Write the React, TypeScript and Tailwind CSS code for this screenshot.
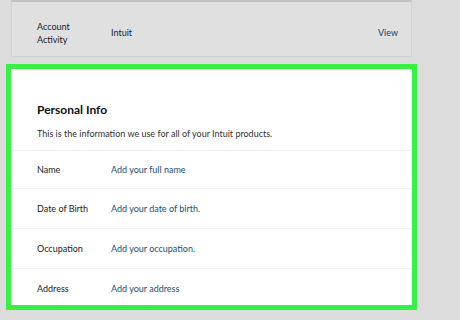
import React from 'react';

const rows = [
  { label: 'Name', value: 'Add your full name' },
  { label: 'Date of Birth', value: 'Add your date of birth.' },
  { label: 'Occupation', value: 'Add your occupation.' },
  { label: 'Address', value: 'Add your address' },
];

export default function App() {
  return (
    <div className="w-[460px] h-[320px] overflow-hidden bg-[#dcdcdc] font-['Lato',sans-serif]">
      {/* previous card, cut off at top */}
      <div className="ml-[11px] w-[401px] h-[57px] pt-[7px] bg-[#e0e0e0] border border-[#d3d3d3] border-t-2 border-t-[#c2c2c2] flex items-center text-[9px] text-[#222]">
        <div className="w-[74px] pl-[25px] box-content leading-[13px]">
          Account
          <br />
          Activity
        </div>
        <div className="flex-1">Intuit</div>
        <div className="pr-[13px] text-[#1e3f5a]">View</div>
      </div>

      {/* highlighted panel */}
      <div className="mt-[7px] ml-[6px] w-[411px] h-[246px] border-[5px] border-[#37ef45] bg-white">
        <div className="pl-[26px] pt-[33px] pb-[10px] border-b border-[#f3f3f3]">
          <h2 className="text-[12px] font-bold text-[#111] leading-[16px]">Personal Info</h2>
          <p className="mt-[10px] text-[9px] text-[#333] leading-[12px]">
            This is the information we use for all of your Intuit products.
          </p>
        </div>
        {rows.map((row, i) => (
          <div
            key={row.label}
            className={`flex items-center pl-[26px] text-[9px] ${i === 0 ? 'h-[38px]' : 'h-[40px]'} ${i < rows.length - 1 ? 'border-b border-[#f3f3f3]' : ''}`}
          >
            <div className="w-[74px] text-[#222]">{row.label}</div>
            <div className="text-[#1d4d74]">{row.value}</div>
          </div>
        ))}
      </div>
    </div>
  );
}
